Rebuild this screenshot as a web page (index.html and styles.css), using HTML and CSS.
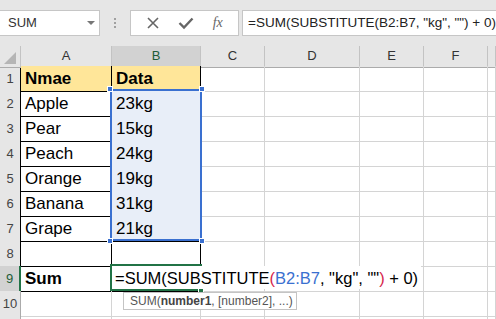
FILE: index.html
```html
<!DOCTYPE html>
<html lang="en">
<head>
  <meta charset="UTF-8">
  <title>SUM with SUBSTITUTE</title>
  <link rel="stylesheet" href="styles.css">
</head>
<body>

  <div class="topbar">
    <div class="namebox">SUM<span class="arrow"></span></div>
    <div class="grip"><i></i><i></i><i></i></div>
    <div class="btnbox">
      <svg class="ico" width="14" height="14" viewBox="0 0 14 14"><path d="M2 2 L12 12 M12 2 L2 12" stroke="#666" stroke-width="1.6" fill="none"/></svg>
      <svg class="ico" width="16" height="14" viewBox="0 0 16 14"><path d="M1.5 7 L6 11.5 L14.5 2.5" stroke="#666" stroke-width="2.4" fill="none"/></svg>
      <span class="fx"><i>f</i>x</span>
    </div>
    <div class="formula">=SUM(SUBSTITUTE(B2:B7, "kg", "") + 0)</div>
  </div>

  <div class="sheet">
    <div class="row head">
      <div class="c rh corner"><span class="tri"></span></div>
      <div class="c">A</div><div class="c on">B</div><div class="c">C</div><div class="c">D</div><div class="c">E</div><div class="c">F</div><div class="c"></div>
    </div>
    <div class="row">
      <div class="c rh tb">1</div><div class="c tb yel bold">Nmae</div><div class="c tb yel bold">Data</div>
      <div class="c"></div><div class="c"></div><div class="c"></div><div class="c"></div><div class="c"></div>
    </div>
    <div class="row">
      <div class="c rh tb">2</div><div class="c tb">Apple</div><div class="c tb sel">23kg</div>
      <div class="c"></div><div class="c"></div><div class="c"></div><div class="c"></div><div class="c"></div>
    </div>
    <div class="row">
      <div class="c rh tb">3</div><div class="c tb">Pear</div><div class="c tb sel">15kg</div>
      <div class="c"></div><div class="c"></div><div class="c"></div><div class="c"></div><div class="c"></div>
    </div>
    <div class="row">
      <div class="c rh tb">4</div><div class="c tb">Peach</div><div class="c tb sel">24kg</div>
      <div class="c"></div><div class="c"></div><div class="c"></div><div class="c"></div><div class="c"></div>
    </div>
    <div class="row">
      <div class="c rh tb">5</div><div class="c tb">Orange</div><div class="c tb sel">19kg</div>
      <div class="c"></div><div class="c"></div><div class="c"></div><div class="c"></div><div class="c"></div>
    </div>
    <div class="row">
      <div class="c rh tb">6</div><div class="c tb">Banana</div><div class="c tb sel">31kg</div>
      <div class="c"></div><div class="c"></div><div class="c"></div><div class="c"></div><div class="c"></div>
    </div>
    <div class="row">
      <div class="c rh tb">7</div><div class="c tb">Grape</div><div class="c tb sel">21kg</div>
      <div class="c"></div><div class="c"></div><div class="c"></div><div class="c"></div><div class="c"></div>
    </div>
    <div class="row">
      <div class="c rh tb">8</div><div class="c tb"></div><div class="c tb"></div>
      <div class="c"></div><div class="c"></div><div class="c"></div><div class="c"></div><div class="c"></div>
    </div>
    <div class="row">
      <div class="c rh tb act">9</div><div class="c tb bold">Sum</div><div class="c tb"></div>
      <div class="c"></div><div class="c"></div><div class="c"></div><div class="c"></div><div class="c"></div>
    </div>
    <div class="row">
      <div class="c rh">10</div><div class="c"></div><div class="c"></div>
      <div class="c"></div><div class="c"></div><div class="c"></div><div class="c"></div><div class="c"></div>
    </div>
    <div class="row">
      <div class="c rh"></div><div class="c"></div><div class="c"></div>
      <div class="c"></div><div class="c"></div><div class="c"></div><div class="c"></div><div class="c"></div>
    </div>

    <!-- selection B2:B7 -->
    <div class="selbox">
      <span class="h tl"></span><span class="h tr"></span><span class="h bl"></span><span class="h br"></span>
    </div>

    <!-- editing cell B9 -->
    <div class="active"><span class="fill"></span></div>
    <div class="edit">=SUM(SUBSTITUTE<span class="red">(</span><span class="blue">B2:B7</span>, "kg", ""<span class="red">)</span> + 0)</div>

    <div class="tip">SUM(<b>number1</b>, [number2], ...)</div>
  </div>

</body>
</html>
```

FILE: styles.css
```css
body {
  margin: 0;
  width: 496px;
  height: 319px;
  overflow: hidden;
  background: #fff;
  font-family: 'Liberation Sans', Arial, sans-serif;
  color: #000;
}

/* formula bar */
.topbar {
  height: 46px;
  background: #e6e6e6;
  display: flex;
  align-items: flex-start;
  padding-top: 10px;
  box-sizing: border-box;
}

.namebox {
  position: relative;
  width: 103px;
  height: 26px;
  margin-left: -1px;
  box-sizing: border-box;
  background: #fff;
  border: 1px solid #c6c6c6;
  padding-left: 8px;
  font-size: 13px;
  line-height: 24px;
  color: #333;
}

.namebox .arrow {
  position: absolute;
  left: 87px;
  top: 10px;
  border-left: 4px solid transparent;
  border-right: 4px solid transparent;
  border-top: 4px solid #777;
}

.grip {
  width: 30px;
  display: flex;
  flex-direction: column;
  align-items: center;
  gap: 2px;
  padding-top: 8px;
}

.grip i {
  width: 2px;
  height: 2px;
  background: #a0a0a0;
}

.btnbox {
  width: 111px;
  height: 26px;
  box-sizing: border-box;
  background: #fff;
  border: 1px solid #c6c6c6;
  display: flex;
  align-items: center;
  justify-content: space-around;
  padding: 0 6px;
}

.fx {
  font-family: 'Liberation Serif', serif;
  font-style: italic;
  font-size: 14px;
  color: #666;
}

.formula {
  flex: 1;
  height: 26px;
  margin-left: 3px;
  box-sizing: border-box;
  background: #fff;
  border: 1px solid #c6c6c6;
  border-right: none;
  padding-left: 5px;
  font-size: 13.5px;
  line-height: 24px;
  color: #222;
  white-space: nowrap;
}

/* grid */
.sheet {
  position: relative;
}

.row {
  display: grid;
  grid-template-columns: 21px 91px 89px 64px 95px 64px 64px 1fr;
  height: 25px;
}

.row.head {
  height: 20px;
}

.c {
  box-sizing: border-box;
  border-right: 1px solid #d4d4d4;
  border-bottom: 1px solid #d4d4d4;
  font-size: 17px;
  line-height: 25px;
  padding-left: 4px;
  white-space: nowrap;
}

.head .c {
  background: #e6e6e6;
  border-right-color: #c3c3c3;
  border-bottom-color: #ababab;
  font-size: 13px;
  line-height: 20px;
  text-align: center;
  padding: 0;
  color: #333;
}

.head .c.on {
  background: #d2d2d2;
  border-bottom: 2px solid #217346;
  color: #1e5c37;
}

.rh {
  background: #e6e6e6;
  border-right-color: #ababab;
  font-size: 13px;
  text-align: center;
  padding: 0;
  color: #444;
}

.rh.tb {
  border-right-color: #000;
}

.rh.act {
  background: #d2d2d2;
  border-right: 2px solid #217346;
  color: #1e5c37;
}

.corner {
  position: relative;
}

.tri {
  position: absolute;
  right: 4px;
  bottom: 3px;
  border-left: 12px solid transparent;
  border-bottom: 12px solid #b5b5b5;
}

.tb {
  border-right-color: #000;
  border-bottom-color: #000;
}

.yel {
  background: #ffe699;
}

.bold {
  font-weight: bold;
}

.sel {
  background: #e8eef8;
}

/* overlays */
.selbox {
  position: absolute;
  left: 110px;
  top: 43px;
  width: 92px;
  height: 152px;
  box-sizing: border-box;
  border: 2px solid #3a70d0;
}

.h {
  position: absolute;
  width: 4px;
  height: 4px;
  background: #3a70d0;
  border: 1px solid #fff;
}

.h.tl { left: -5px; top: -5px; }
.h.tr { right: -5px; top: -5px; }
.h.bl { left: -5px; bottom: -5px; }
.h.br { right: -5px; bottom: -5px; }

.active {
  position: absolute;
  left: 110px;
  top: 218px;
  width: 92px;
  height: 27px;
  box-sizing: border-box;
  border: 2px solid #217346;
}

.fill {
  position: absolute;
  right: -4px;
  bottom: -4px;
  width: 4px;
  height: 4px;
  background: #217346;
  border: 1px solid #fff;
}

.edit {
  position: absolute;
  left: 112px;
  top: 220px;
  width: 309px;
  height: 23px;
  background: #fff;
  padding-left: 3px;
  box-sizing: border-box;
  font-size: 16.5px;
  line-height: 24px;
  white-space: nowrap;
}

.red {
  color: #d6254b;
}

.blue {
  color: #3a70d0;
}

.tip {
  position: absolute;
  left: 123px;
  top: 246px;
  width: 174px;
  height: 18px;
  box-sizing: border-box;
  background: #fff;
  border: 1px solid #c4c4c4;
  padding-left: 6px;
  font-size: 12px;
  line-height: 16px;
  color: #555;
  white-space: nowrap;
}

.tip b {
  color: #444;
}
```
